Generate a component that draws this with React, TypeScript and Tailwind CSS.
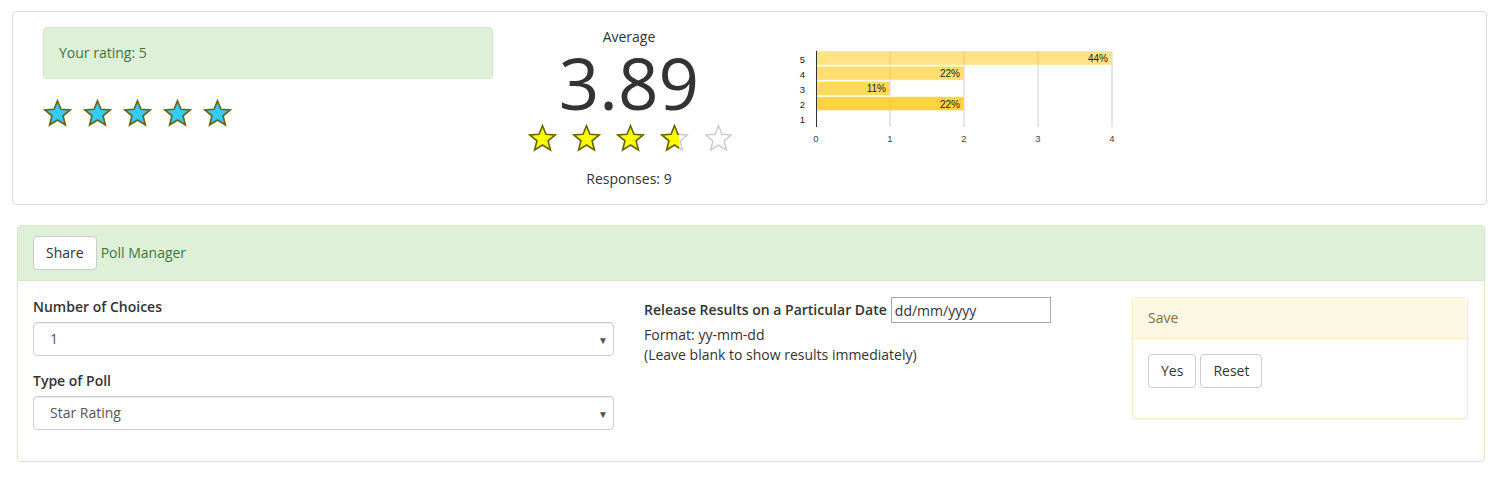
import React from 'react';

const STAR = 'M12 1.5 L14.9 8.6 L22.6 9.2 L16.7 14.2 L18.6 21.8 L12 17.7 L5.4 21.8 L7.3 14.2 L1.4 9.2 L9.1 8.6 Z';

const Star: React.FC<{ fill: string; stroke: string; part?: number; id?: string }> = ({ fill, stroke, part, id }) => (
    <svg width="29" height="28" viewBox="0 0 24 23.5" className="block">
        {part !== undefined ? (
            <>
                <defs>
                    <clipPath id={id}>
                        <rect x="0" y="0" width={24 * part} height="24" />
                    </clipPath>
                </defs>
                <path d={STAR} fill="#fff" stroke="#cccccc" strokeWidth="1.2" />
                <path d={STAR} fill={fill} stroke={stroke} strokeWidth="1.4" clipPath={`url(#${id})`} />
            </>
        ) : (
            <path d={STAR} fill={fill} stroke={stroke} strokeWidth={stroke === '#cccccc' ? 1.2 : 1.4} />
        )}
    </svg>
);

const bars = [
    { label: '5', value: 4, pct: '44%', op: 0.48 },
    { label: '4', value: 2, pct: '22%', op: 0.56 },
    { label: '3', value: 1, pct: '11%', op: 0.64 },
    { label: '2', value: 2, pct: '22%', op: 0.75 },
    { label: '1', value: 0, pct: '', op: 0 },
];

const Chart: React.FC = () => {
    const x0 = 21;
    const unit = 74;
    return (
        <svg width="330" height="105" className="block" style={{ fontFamily: '"Liberation Sans", Arial, sans-serif' }}>
            {[1, 2, 3, 4].map(i => (
                <line key={i} x1={x0 + i * unit} x2={x0 + i * unit} y1="6" y2="82" stroke="#cccccc" strokeWidth="1" />
            ))}
            {bars.map((b, i) => (
                <g key={b.label}>
                    {b.value > 0 && (
                        <rect x={x0} y={6 + i * 15.2} width={b.value * unit} height="14" fill="#ffc400" fillOpacity={b.op} stroke="#fff" strokeOpacity="0.5" strokeWidth="1" />
                    )}
                    {b.pct && (
                        <text x={x0 + b.value * unit - 4} y={17 + i * 15.2} textAnchor="end" fontSize="10" fill="#222">{b.pct}</text>
                    )}
                    <text x="10" y={17.5 + i * 15.2} textAnchor="end" fontSize="9.5" fill="#222">{b.label}</text>
                </g>
            ))}
            <line x1={x0 + 0.5} x2={x0 + 0.5} y1="6" y2="82" stroke="#333" strokeWidth="1" />
            {[0, 1, 2, 3, 4].map(i => (
                <text key={i} x={x0 + i * unit} y="97" textAnchor="middle" fontSize="9.5" fill="#444">{i}</text>
            ))}
        </svg>
    );
};

const App: React.FC = () => {
    return (
        <div className="bg-white text-[14px] leading-5 text-[#333]" style={{ fontFamily: '"Open Sans", sans-serif' }}>
            <div className="pt-[11px] pl-[12px] pr-[12px]">
                <div className="w-[1475px] h-[194px] border border-[#dddddd] rounded flex pt-[15px]">
                    <div className="ml-[30px] w-[450px]">
                        <div className="bg-[#dff0d8] border border-[#d6e9c6] rounded text-[#3c763d] p-[15px]">Your rating: 5</div>
                        <div className="flex gap-[11px] mt-[20px]">
                            {[0, 1, 2, 3, 4].map(i => (
                                <Star key={i} fill="#33ccff" stroke="#666600" />
                            ))}
                        </div>
                    </div>
                    <div className="w-[272px] flex flex-col items-center">
                        <div>Average</div>
                        <div className="text-[71px] leading-[64px] mt-[4px] mb-[4px] text-[#333]">3.89</div>
                        <div className="flex gap-[15px] mt-[5px] ml-[2px]">
                            <Star fill="#ffff00" stroke="#666600" />
                            <Star fill="#ffff00" stroke="#666600" />
                            <Star fill="#ffff00" stroke="#666600" />
                            <Star fill="#ffff00" stroke="#666600" part={0.66} id="half" />
                            <Star fill="#ffffff" stroke="#cccccc" />
                        </div>
                        <div className="mt-[17px]">Responses: 9</div>
                    </div>
                    <div className="ml-[30px] mt-[18px]">
                        <Chart />
                    </div>
                </div>
            </div>

            <div className="mt-[20px] ml-[17px] w-[1468px] border border-[#d6e9c6] rounded">
                <div className="bg-[#dff0d8] border-b border-[#d6e9c6] px-[15px] py-[10px] flex items-center gap-1 text-[#3c763d]">
                    <button className="h-[34px] px-3 bg-white border border-[#cccccc] rounded text-[#333]">Share</button>
                    <span>Poll Manager</span>
                </div>
                <div className="px-[15px] pt-[16px] pb-[16px] grid grid-cols-[581px_458px_1fr] gap-x-[30px]">
                    <div>
                        <div className="mb-[15px]">
                            <label className="block font-semibold mb-[5px]">Number of Choices</label>
                            <div className="relative">
                                <select className="w-full h-[34px] border border-[#cccccc] rounded pl-4 pr-8 text-[#555] appearance-none bg-white shadow-[inset_0_1px_1px_rgba(0,0,0,0.075)]">
                                    <option>1</option>
                                </select>
                                <span className="absolute right-[6px] top-[8px] text-[10px] text-[#555] pointer-events-none">▼</span>
                            </div>
                        </div>
                        <div className="mb-[15px]">
                            <label className="block font-semibold mb-[5px]">Type of Poll</label>
                            <div className="relative">
                                <select className="w-full h-[34px] border border-[#cccccc] rounded pl-4 pr-8 text-[#555] appearance-none bg-white shadow-[inset_0_1px_1px_rgba(0,0,0,0.075)]">
                                    <option>Star Rating</option>
                                </select>
                                <span className="absolute right-[6px] top-[8px] text-[10px] text-[#555] pointer-events-none">▼</span>
                            </div>
                        </div>
                    </div>
                    <div>
                        <div className="flex items-center gap-1 h-[26px]">
                            <label className="font-semibold">Release Results on a Particular Date</label>
                            <input type="text" placeholder="dd/mm/yyyy" className="w-[160px] h-[26px] border border-[#a9a9a9] px-[3px] placeholder:text-[#333] outline-none" />
                        </div>
                        <div className="mt-[2px]">Format: yy-mm-dd</div>
                        <div>(Leave blank to show results immediately)</div>
                    </div>
                    <div>
                        <div className="w-[336px] border border-[#faebcc] rounded shadow-[0_1px_1px_rgba(0,0,0,0.05)]">
                            <div className="bg-[#fcf8e3] border-b border-[#faebcc] text-[#8a6d3b] px-[15px] py-[10px]">Save</div>
                            <div className="p-[15px] pb-[30px] flex gap-1">
                                <button className="h-[34px] px-3 bg-white border border-[#cccccc] rounded text-[#333]">Yes</button>
                                <button className="h-[34px] px-3 bg-white border border-[#cccccc] rounded text-[#333]">Reset</button>
                            </div>
                        </div>
                    </div>
                </div>
            </div>
        </div>
    );
};

export default App;
